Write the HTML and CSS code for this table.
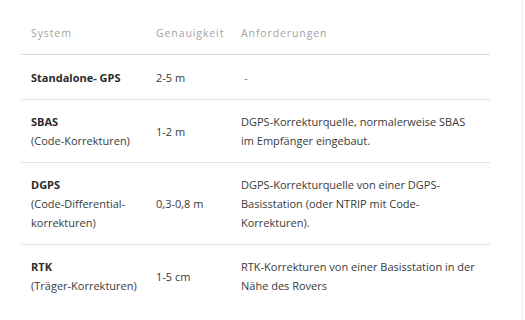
FILE: index.html
```html
<!DOCTYPE html>
<html lang="de">
<head>
<meta charset="utf-8">
<link rel="stylesheet" href="styles.css">
</head>
<body>
<div class="page">
  <table class="gps">
    <thead>
      <tr>
        <th class="c1">System</th>
        <th class="c2">Genauigkeit</th>
        <th class="c3">Anforderungen</th>
      </tr>
    </thead>
    <tbody>
      <tr>
        <td class="c1"><b>Standalone- GPS</b></td>
        <td class="c2">2-5 m</td>
        <td class="c3 dash">-</td>
      </tr>
      <tr>
        <td class="c1"><b>SBAS</b><br>(Code-Korrekturen)</td>
        <td class="c2">1-2 m</td>
        <td class="c3">DGPS-Korrekturquelle, normalerweise SBAS<br>im Empfänger eingebaut.</td>
      </tr>
      <tr>
        <td class="c1"><b>DGPS</b><br>(Code-Differential-<br>korrekturen)</td>
        <td class="c2">0,3-0,8 m</td>
        <td class="c3">DGPS-Korrekturquelle von einer DGPS-<br>Basisstation (oder NTRIP mit Code-<br>Korrekturen).</td>
      </tr>
      <tr class="last">
        <td class="c1"><b>RTK</b><br>(Träger-Korrekturen)</td>
        <td class="c2">1-5 cm</td>
        <td class="c3">RTK-Korrekturen von einer Basisstation in der<br>Nähe des Rovers</td>
      </tr>
    </tbody>
  </table>
</div>
</body>
</html>
```
FILE: styles.css
```css
html, body {
  margin: 0;
  padding: 0;
  background: #fff;
}
body {
  font-family: "Open Sans", "Liberation Sans", sans-serif;
  color: #3a3a3a;
  width: 525px;
  height: 320px;
  overflow: hidden;
}
.page {
  position: relative;
  height: 320px;
  padding: 21px 0 0 21px;
  box-sizing: border-box;
}
.page::after {
  content: "";
  position: absolute;
  top: 0;
  bottom: 0;
  left: 522px;
  width: 1px;
  background: #f0f0f0;
}
.gps {
  width: 469px;
  border-collapse: collapse;
  table-layout: fixed;
}
.gps th,
.gps td {
  box-sizing: border-box;
}
.gps .c1 { width: 125px; }
.gps .c2 { width: 85px; }
.gps th {
  font-weight: 400;
  font-size: 10.5px;
  letter-spacing: 0.9px;
  color: #a3a3a3;
  text-align: left;
  padding: 2.5px 10px 11.5px;
  line-height: 19px;
  border-bottom: 1px solid #dcdcdc;
}
.gps td {
  font-size: 11px;
  line-height: 19px;
  padding: 12px 10px;
  vertical-align: middle;
  border-bottom: 1px solid #e3e3e3;
  white-space: nowrap;
}
.gps tbody tr:first-child td { padding-top: 13px; }
.gps td b {
  font-weight: 700;
  color: #2b2b2b;
}
.gps td.c3 { vertical-align: top; }
.gps td.dash { padding-left: 13px; color: #777; }
.gps tr.last td { border-bottom: 0; }
```
